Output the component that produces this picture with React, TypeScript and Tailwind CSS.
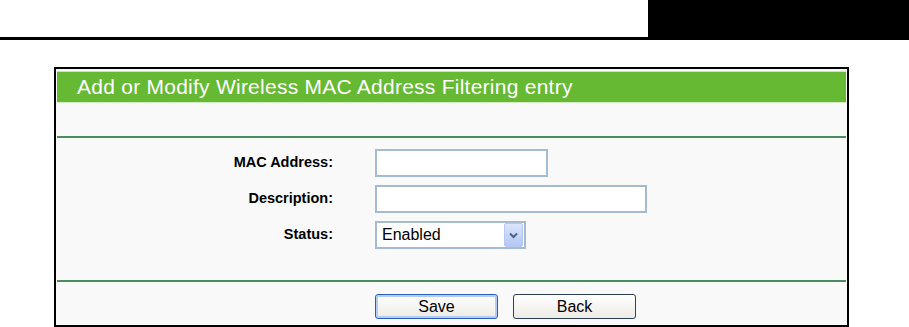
import React from "react";

function SelectArrow() {
  return (
    <div className="w-[19px] h-[24px] rounded-[2px] border border-[#b7c8f0] bg-gradient-to-b from-[#dbe5fd] to-[#b3c7f5] flex items-center justify-center">
      <svg width="9" height="7" viewBox="0 0 9 7">
        <path d="M1 1.5 L4.5 5 L8 1.5" fill="none" stroke="#4d6185" strokeWidth="2" />
      </svg>
    </div>
  );
}

export default function App() {
  const font = { fontFamily: '"Liberation Sans", Arial, sans-serif' };
  return (
    <div className="w-[909px] h-[327px] bg-white overflow-hidden" style={font}>
      <div className="flex h-[40px]">
        <div className="flex-1 border-b-[3px] border-black" />
        <div className="w-[261px] bg-black" />
      </div>
      <div className="ml-[54px] mt-[27px] w-[795px] h-[260px] border-2 border-black bg-[#f9f9f9] flex flex-col px-[1px] pt-[2px]">
        <div className="h-[1px] bg-[#cde6bf]" />
        <div className="h-[30px] bg-[#66b933] text-white text-[21px] tracking-[0.25px] leading-[30px] pl-[20px]">
          Add or Modify Wireless MAC Address Filtering entry
        </div>
        <div className="h-[1px] bg-[#d4ebc8]" />
        <div className="h-[33px]" />
        <div className="h-[2px] bg-[#4c8a63]" />
        <div className="flex flex-col pt-[11px] gap-[8px] h-[142px]">
          <div className="flex items-center h-[28px]">
            <div className="w-[276px] text-right font-bold text-[14.5px] text-black">MAC Address:</div>
            <div className="ml-[42px] w-[173px] h-[28px] border-2 border-[#a5bad3] bg-white" />
          </div>
          <div className="flex items-center h-[28px]">
            <div className="w-[276px] text-right font-bold text-[14.5px] text-black">Description:</div>
            <div className="ml-[42px] w-[272px] h-[28px] border-2 border-[#a5bad3] bg-white" />
          </div>
          <div className="flex items-center h-[28px]">
            <div className="w-[276px] text-right font-bold text-[14.5px] text-black">Status:</div>
            <div className="ml-[42px] w-[151px] h-[28px] border-2 border-[#a5bad3] bg-white flex items-center justify-between pl-[5px] pr-[1px]">
              <span className="text-[16px] text-black">Enabled</span>
              <SelectArrow />
            </div>
          </div>
        </div>
        <div className="h-[2px] bg-[#4c8a63]" />
        <div className="flex gap-[15px] pt-[12px] pl-[318px]">
          <button className="w-[123px] h-[25px] rounded-[3px] border border-[#2a5fb8] shadow-[inset_0_0_0_2px_#b5cdf5] bg-gradient-to-b from-white to-[#ecebe6] text-[16px] text-black leading-[22px]">
            Save
          </button>
          <button className="w-[123px] h-[25px] rounded-[3px] border border-[#2e3f5c] bg-gradient-to-b from-white to-[#ecebe6] text-[16px] text-black leading-[22px]">
            Back
          </button>
        </div>
      </div>
    </div>
  );
}
